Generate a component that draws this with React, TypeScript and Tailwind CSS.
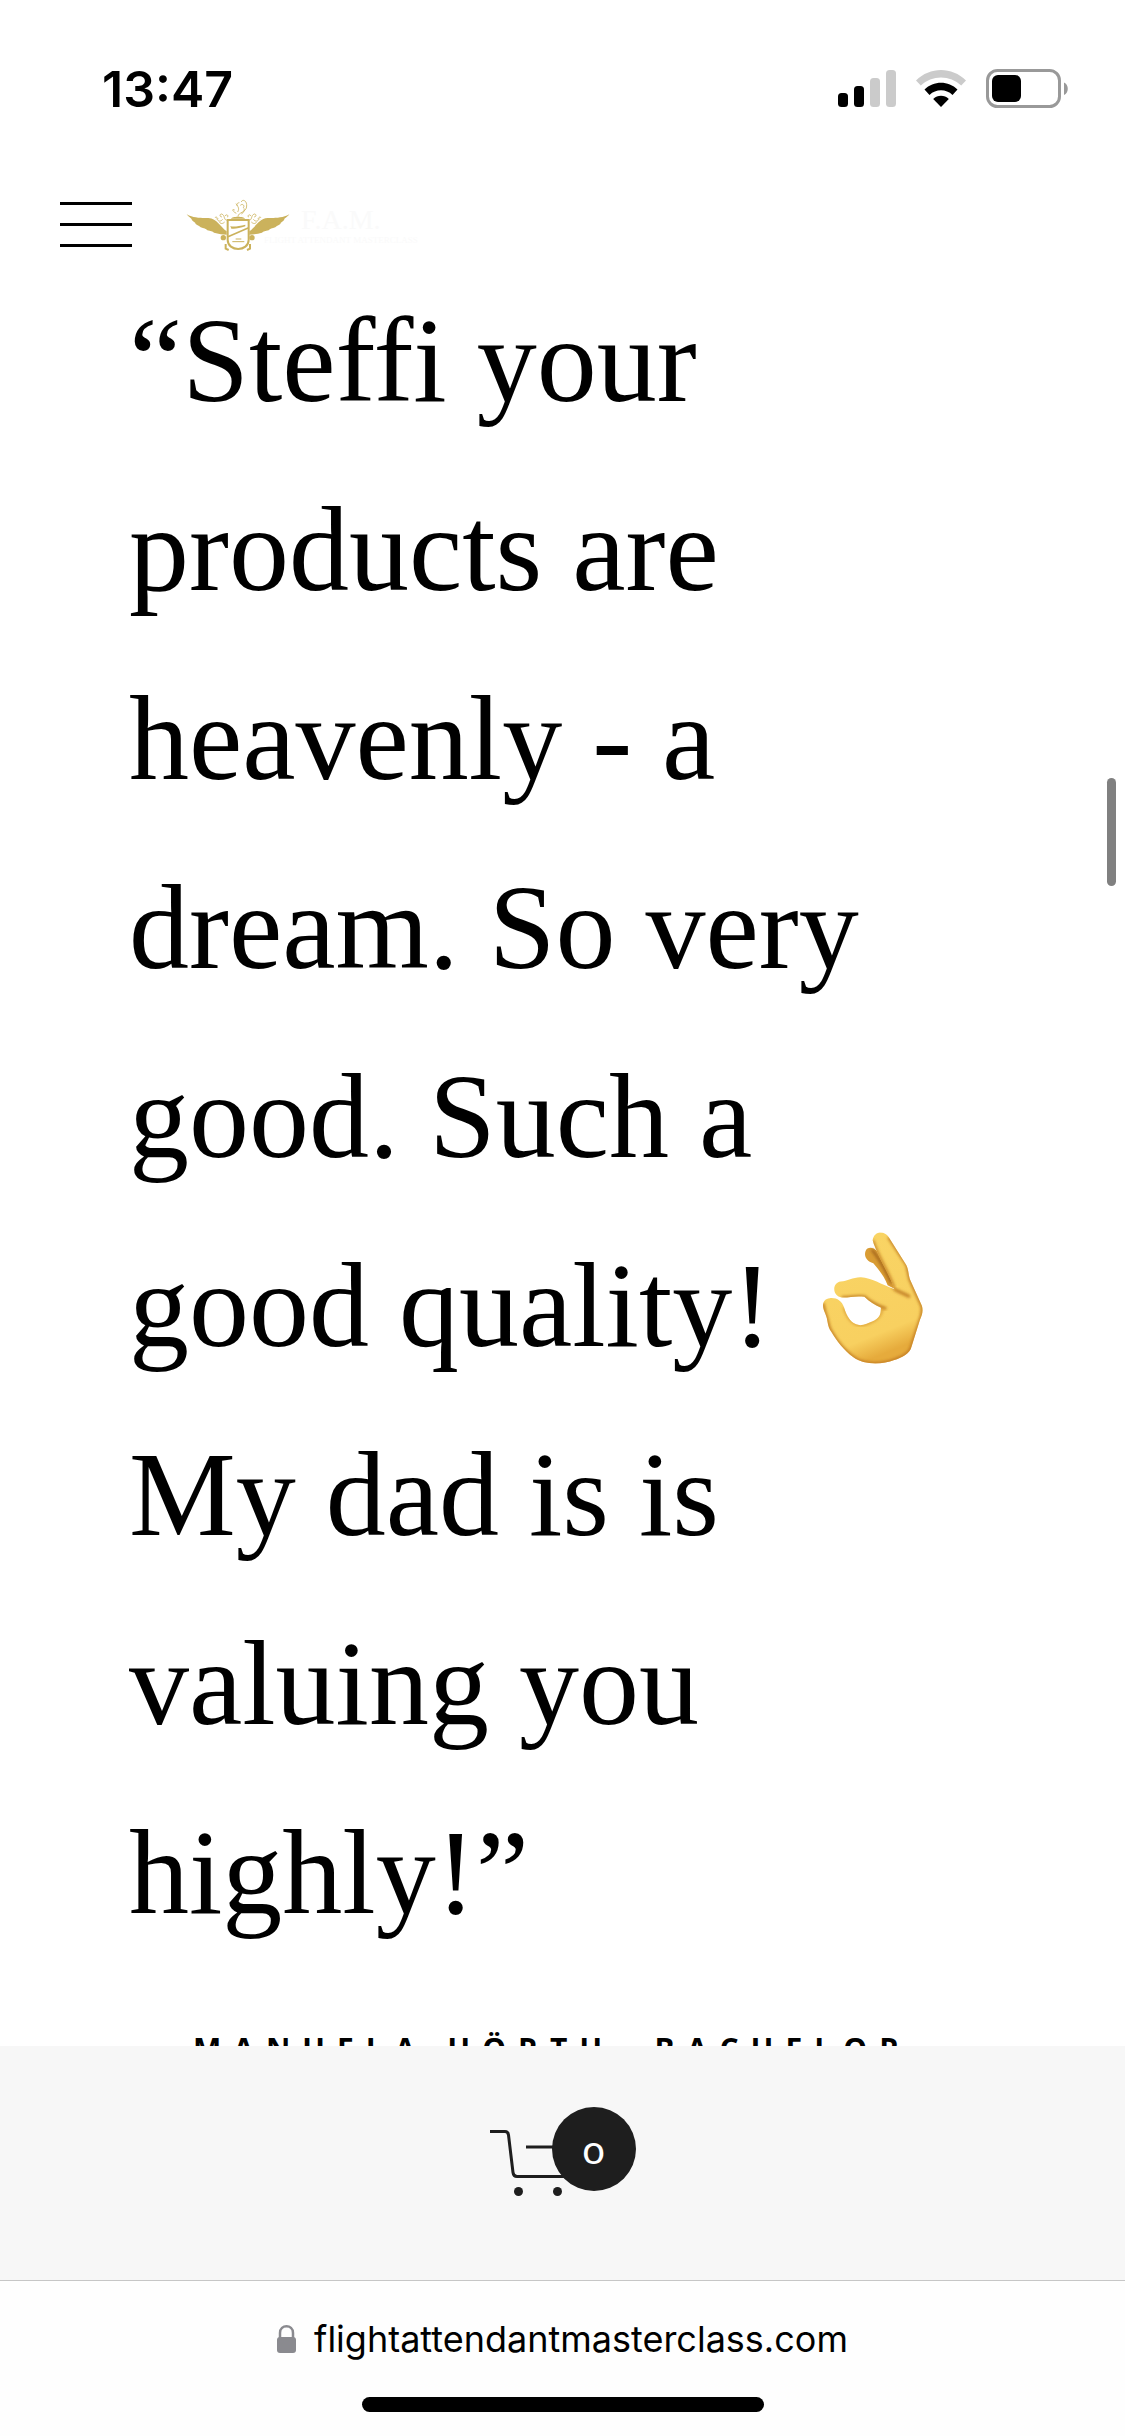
const quote =
  "“Steffi your products are heavenly - a dream. So very good. Such a good quality! ";

function SignalIcon() {
  return (
    <svg className="h-[38px] w-[58px]" viewBox="0 0 58 38" aria-label="Signal">
      <rect x="0" y="23" width="10" height="14" rx="3.5" />
      <rect x="16" y="16" width="10" height="21" rx="3.5" />
      <rect x="32" y="8" width="10" height="29" rx="3.5" fill="#cbcbcb" />
      <rect x="48" y="0" width="10" height="37" rx="3.5" fill="#cbcbcb" />
    </svg>
  );
}

function WifiIcon() {
  return (
    <svg className="h-[38px] w-[50px]" viewBox="0 0 50 38" aria-label="Wi-Fi">
      <path d="M0 10.5C14-3.5 36-3.5 50 10.5L45.200 15.500C34 4.700 16 4.700 4.800 15.500Z" fill="#cbcbcb" />
      <path d="M8.500 19.500C17.500 10.500 32.500 10.500 41.500 19.500L36.500 25C30 18.800 20 18.800 13.500 25Z" />
      <path d="M17.200 29C21.500 24.800 28.500 24.800 32.800 29L25 37Z" />
    </svg>
  );
}

function BatteryIcon() {
  return (
    <svg className="h-10 w-[83px]" viewBox="0 0 83 40" aria-label="Battery">
      <rect x="1.500" y="1.500" width="72" height="36" rx="10" fill="none" stroke="#999" strokeWidth="3" />
      <rect x="6" y="6" width="29" height="27" rx="6" />
      <path d="M78 13.500C83 15.500 83 24 78 26Z" fill="#999" />
    </svg>
  );
}

function Crest() {
  return (
    <svg className="h-[53px] w-[104px]" viewBox="48 26 312 159" fill="none" stroke="#cbb25c" aria-hidden="true">
      <g fill="#cbb25c" stroke="none">
        <path d="M50 75C72 87 92 86 115 86C142 88 150 112 170 126V136C160 135 145 134 132 130C128 126 122 126 112 123C108 118 102 117 92 114C89 109 84 109 76 103C79 100 70 98 65 91C68 89 56 84 50 75Z" />
        <path d="M358 75C336 87 316 86 293 86C266 88 258 112 238 126V136C248 135 263 134 276 130C280 126 286 126 296 123C300 118 306 117 316 114C319 109 324 109 332 103C329 100 338 98 343 91C340 89 352 84 358 75Z" />
        <circle cx="160" cy="145" r="8" />
        <circle cx="246" cy="145" r="8" />
        <path d="M183 88C185 80 222 80 225 88Z" />
        <path d="M181 110C190 114 207 110 226 106V111C210 117 192 120 184 118Z" />
      </g>
      <path d="M173 92H236V151C236 188 173 188 173 151Z" strokeWidth="6" />
      <path d="M174 142L236 115" strokeWidth="5" />
      <path d="M187 157H223M197 149H214" strokeWidth="3" />
      <path d="M167 164V178L176 182M240 164V178L231 182" strokeWidth="6" />
      <g strokeWidth="2.500">
        <path d="M204 82C204 68 230 70 230 50C231 32 216 29 214 38M211 48C218 41 226 50 219 56M214 74C222 70 224 62 222 57M203 68C210 56 202 50 198 43M194 62C184 57 188 67 199 72M208 40C200 41 199 47 203 50" />
        <path d="M170 93C160 90 166 78 155 74C146 75 151 85 156 82M158 90C150 100 139 94 144 87M135 86C138 79 145 86 139 90M165 80C170 72 178 80 171 84M148 98C152 104 158 104 164 98" />
        <path d="M238 93C248 90 242 78 253 74C262 75 257 85 252 82M250 90C258 100 269 94 264 87M273 86C270 79 263 86 269 90M243 80C238 72 230 80 237 84M260 98C256 104 250 104 244 98" />
      </g>
    </svg>
  );
}

function OkHand() {
  return (
    <svg
      className="ml-5 inline-block h-[132px] w-[102px] align-[-18px]"
      viewBox="126 96 304 397"
      role="img"
      aria-label="OK hand"
    >
      <defs>
        <linearGradient id="skin" x1="0" y1="0" x2="0.300" y2="1">
          <stop offset="0" stopColor="#f9d565" />
          <stop offset="0.850" stopColor="#f8d060" />
          <stop offset="1" stopColor="#e6ab3c" />
        </linearGradient>
        <filter id="soft" x="-10%" y="-10%" width="120%" height="120%">
          <feGaussianBlur stdDeviation="4" />
        </filter>
        <clipPath id="palm">
          <path d="M277 121C280 93 312 90 325 111L378 195C385 208 384 222 389 238L425 318C431 335 424 347 419 361L394 440C389 463 363 474 342 481C304 496 250 496 219 473C192 454 166 420 153 397C139 377 144 362 134 340C121 315 129 296 148 295C169 293 184 303 191 323C199 350 211 371 236 376C252 377 263 370 282 362C303 350 300 340 302 324C282 316 268 306 252 291C226 287 207 294 184 293C156 290 153 249 181 245C201 244 219 231 242 232C274 234 302 253 342 268C332 230 288 163 277 121Z" />
        </clipPath>
      </defs>
      <path d="M257 150C264 139 280 142 290 153L342 230L345 268L322 256C312 229 295 209 279 190C257 184 249 166 257 150Z" fill="#d99c34" />
      <path d="M274 150C286 160 311 203 334 250" stroke="#9a5c16" strokeWidth="7" fill="none" filter="url(#soft)" />
      <g clipPath="url(#palm)">
        <rect x="126" y="90" width="304" height="410" fill="url(#skin)" />
        <path d="M277 121C288 163 332 230 342 268" stroke="#c98526" strokeWidth="9" fill="none" filter="url(#soft)" />
        <path d="M325 111L380 195L389 238L425 318C430 342 419 361 394 440C389 463 363 474 342 481C304 496 250 496 219 473C192 454 166 420 153 397C139 377 144 362 134 340L127 310" stroke="#c27b20" strokeWidth="9" fill="none" filter="url(#soft)" />
        <path d="M184 293C207 294 226 287 252 291C268 306 282 316 318 327M342 268C358 278 374 282 389 291" stroke="#bb741b" strokeWidth="8" fill="none" filter="url(#soft)" />
        <path d="M191 323C199 350 211 371 236 376C252 377 263 370 282 362C303 350 300 340 308 326" stroke="#d6962f" strokeWidth="6" fill="none" filter="url(#soft)" />
      </g>
    </svg>
  );
}

function CartIcon() {
  return (
    <svg className="h-[68px] w-[76px]" viewBox="0 0 76 68" fill="none" stroke="#1e1e1e" strokeWidth="3" aria-hidden="true">
      <path d="M0 2.500H15Q18 2.500 18.500 6L23 43.500Q23.500 47.500 27 47.500H76M36 18H76" />
      <circle cx="28.500" cy="62.500" r="4.500" fill="#1e1e1e" stroke="none" />
      <circle cx="67.500" cy="62.500" r="4.500" fill="#1e1e1e" stroke="none" />
    </svg>
  );
}

function LockIcon() {
  return (
    <svg className="h-7 w-[19px]" viewBox="0 0 19 28" aria-hidden="true">
      <path d="M3 13V8C3-1 16-1 16 8V13" fill="none" stroke="#8a8a8f" strokeWidth="2.500" />
      <rect x="0" y="12" width="19" height="16" rx="3" fill="#8a8a8f" />
    </svg>
  );
}

export default function App() {
  return (
    <div className="relative flex h-screen flex-col overflow-hidden bg-white text-black">
      <div className="flex h-[178px] shrink-0 items-center justify-between pr-14 pl-[102px] font-[Inter,sans-serif]">
        <time className="text-[50px] leading-none font-semibold">13:47</time>
        <div className="flex items-center">
          <SignalIcon />
          <span className="ml-5 flex"><WifiIcon /></span>
          <span className="ml-5 flex"><BatteryIcon /></span>
        </div>
      </div>

      <header className="flex h-[88px] shrink-0 items-center px-[60px] pt-1">
        <button type="button" aria-label="Open menu" className="flex w-[72px] flex-col gap-[18px]">
          <span className="h-[3px] w-full bg-black" />
          <span className="h-[3px] w-full bg-black" />
          <span className="h-[3px] w-full bg-black" />
        </button>
        <a href="#" className="ml-[54px] flex items-center">
          <Crest />
          <span className="-ml-[26px] flex flex-col items-center pt-1 font-['Liberation_Serif',serif] text-[#fafafa]">
            <span className="text-[28px] leading-7">F.A.M.</span>
            <span className="text-[9px] leading-3">FLIGHT ATTENDANT MASTERCLASS</span>
          </span>
        </a>
      </header>

      <main className="min-h-0 flex-1 overflow-hidden px-[129px]">
        <figure>
          <blockquote className="font-['Liberation_Serif',serif] text-[120px] leading-[189px]">
            {quote}
            <OkHand /> My dad is is valuing you highly!”
          </blockquote>
          <figcaption className="mt-[58px] pl-16 font-['Open_Sans',sans-serif] text-[30px] leading-[48px] font-bold tracking-[12px] whitespace-nowrap">
            MANUELA HÖRTH, BACHELOR
          </figcaption>
        </figure>
      </main>

      <div className="flex h-[234px] shrink-0 items-start justify-center bg-[#f7f7f7] pt-[61px]">
        <button type="button" aria-label="Cart, 0 items" className="flex items-start">
          <span className="mt-[22px] flex"><CartIcon /></span>
          <span className="z-10 -ml-[14px] flex size-[84px] items-center justify-center rounded-full bg-[#1e1e1e] font-[Lato,sans-serif] text-[40px] leading-none text-white">
            o
          </span>
        </button>
      </div>

      <footer className="flex h-[156px] shrink-0 flex-col items-center border-t border-[#c6c6c6] bg-[#fefefe] font-[Inter,sans-serif]">
        <a href="https://flightattendantmasterclass.com" className="mt-9 flex items-center gap-[18px] text-[36px] leading-[44px]">
          <LockIcon />
          flightattendantmasterclass.com
        </a>
        <div className="mt-9 h-[15px] w-[402px] rounded-full bg-black" />
      </footer>

      <div className="absolute top-[778px] right-[9px] h-[108px] w-[9px] rounded-full bg-[#808080]" />
    </div>
  );
}
